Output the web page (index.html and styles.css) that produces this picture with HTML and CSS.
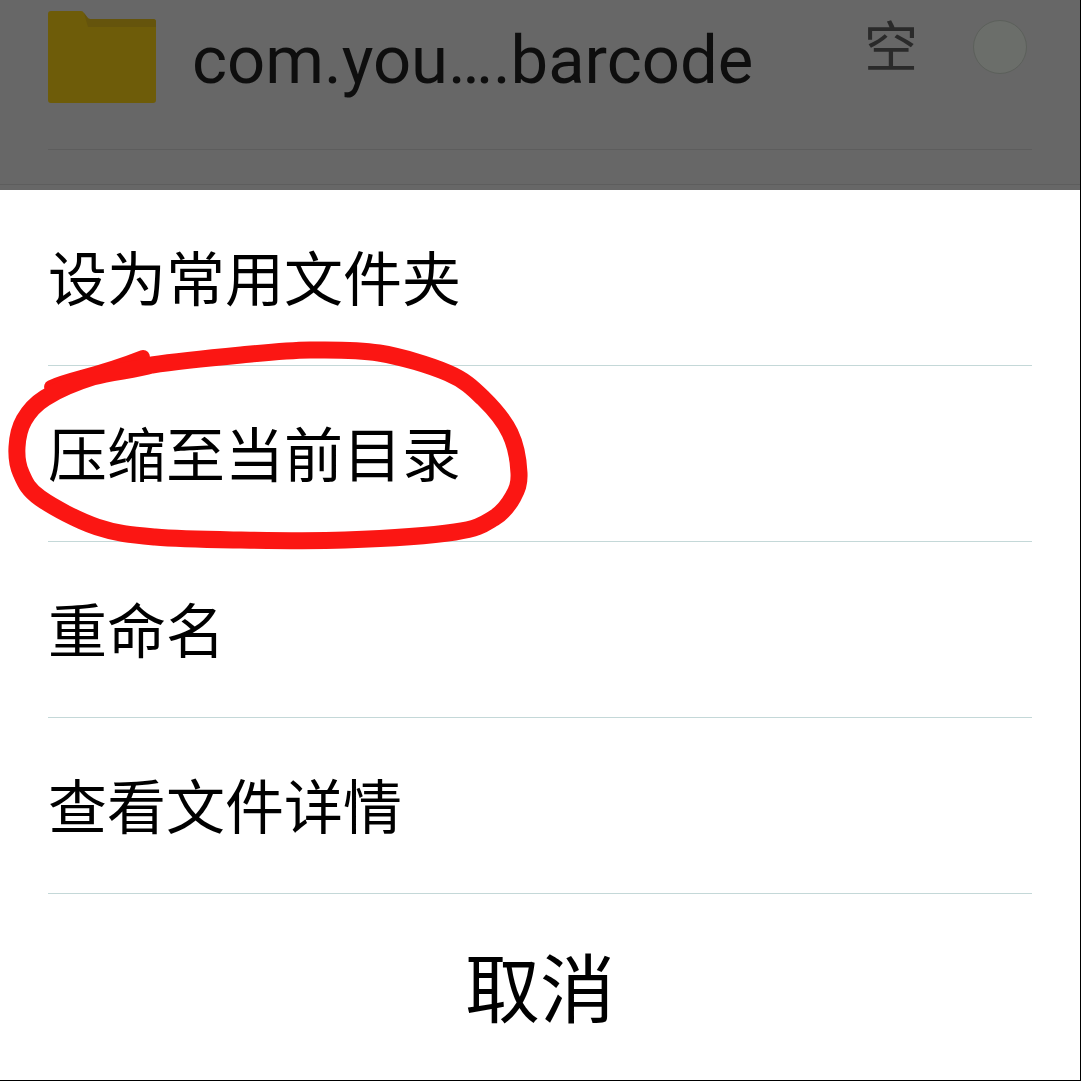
FILE: index.html
```html
<!DOCTYPE html>
<html lang="zh-CN">
<head>
<meta charset="utf-8">
<title>文件操作</title>
<link rel="stylesheet" href="styles.css">
</head>
<body>
<div class="screen">
  <div class="backdrop">
    <div class="file-row">
      <svg class="folder" viewBox="0 0 108 92" aria-hidden="true">
        <path d="M0 3a3 3 0 0 1 3-3h30a4 4 0 0 1 3 2l3 4a4 4 0 0 0 3 2h63a3 3 0 0 1 3 3v78a3 3 0 0 1-3 3H3a3 3 0 0 1-3-3z" fill="#6e5c09"/>
        <path d="M36 2l3 4a4 4 0 0 0 3 2h63a3 3 0 0 1 3 3v5H40z" fill="#65540c"/>
      </svg>
      <span class="file-name">com.you….barcode</span>
      <span class="file-size">空</span>
      <span class="radio"></span>
    </div>
    <div class="edge-line"></div>
  </div>
  <div class="sheet">
    <div class="item">设为常用文件夹</div>
    <div class="item">压缩至当前目录</div>
    <div class="item">重命名</div>
    <div class="item">查看文件详情</div>
    <div class="cancel">取消</div>
    <svg class="scribble" viewBox="0 0 1080 1080" aria-hidden="true">
      <path class="tail" d="M51 387C70 378 95 376 143 357"/>
      <path class="loop" d="M152 365C176.7 361.3 214.7 357.5 241 355S287 350.3 310 350S356 349.2 379 353S430.7 365.5 448 373S472.7 388 483 398S504 420.5 510 433S518.5 462.3 519 473S517.2 489.5 513 497S503.7 512.2 494 518S479.8 528.3 455 532S380.7 538.7 345 540S272.7 540.5 241 540S179 539.2 155 537S116.2 533.5 97 527S52.7 507 40 498S24.8 481.5 21 473S16.5 455.8 17 447S19.3 428.2 24 420S33.5 405.2 45 398S75.2 382.5 93 377S134.2 370.5 152 365Z"/>
    </svg>
  </div>
</div>
</body>
</html>
```
FILE: styles.css
```css
html, body {
  margin: 0;
  padding: 0;
  height: 100%;
  background: #000;
}
body {
  width: 1081px;
  height: 1081px;
  overflow: hidden;
  font-family: Roboto, "Noto Sans CJK SC", sans-serif;
}
.screen {
  position: relative;
  width: 1080px;
  height: 1080px;
  display: flex;
  flex-direction: column;
}
.backdrop {
  height: 190px;
  background: #676767;
  box-sizing: border-box;
  display: flex;
  flex-direction: column;
}
.file-row {
  height: 149px;
  margin: 0 48px;
  border-bottom: 1px solid #5d5d5d;
  display: flex;
  align-items: flex-start;
}
.folder {
  width: 108px;
  height: 92px;
  margin-top: 11px;
  flex: none;
}
.file-name {
  margin-left: 36px;
  margin-top: 23px;
  font-size: 67px;
  line-height: 74px;
  color: #0e0e0e;
  white-space: nowrap;
}
.file-size {
  margin-left: auto;
  margin-top: 14px;
  font-family: "Noto Sans CJK SC", sans-serif;
  font-size: 54px;
  line-height: 60px;
  color: #2a2a2a;
}
.radio {
  width: 52px;
  height: 52px;
  margin: 20px 5px 0 55px;
  border: 1px solid #5c605b;
  border-radius: 50%;
  background: #6b6e6a;
  flex: none;
}
.edge-line {
  margin-top: 34px;
  height: 1px;
  background: #5d5d5d;
}
.sheet {
  flex: 1;
  background: #fff;
  display: flex;
  flex-direction: column;
  font-family: "Noto Sans CJK SC", sans-serif;
  color: #000;
}
.item {
  box-sizing: border-box;
  height: 176px;
  margin: 0 48px;
  padding-bottom: 4px;
  border-bottom: 1px solid #c4d8d8;
  display: flex;
  align-items: center;
  font-size: 59px;
  line-height: 1;
}
.cancel {
  flex: 1;
  display: flex;
  align-items: center;
  justify-content: center;
  font-size: 75px;
  line-height: 1;
  padding-bottom: 6px;
}
.scribble {
  position: absolute;
  left: 0;
  top: 0;
  width: 1080px;
  height: 1080px;
  pointer-events: none;
}
.tail, .loop {
  fill: none;
  stroke: #fb1613;
  stroke-linecap: round;
  stroke-linejoin: round;
}
.tail {
  stroke-width: 14;
}
.loop {
  stroke-width: 17;
}
```
